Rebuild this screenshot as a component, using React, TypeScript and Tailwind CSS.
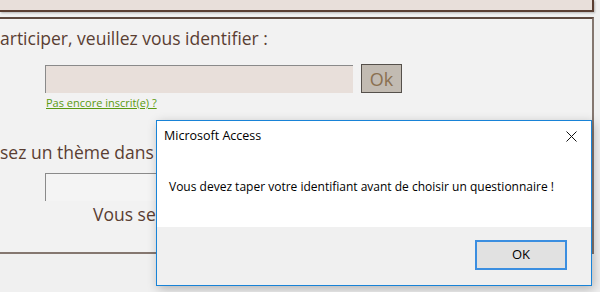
import React from 'react';

const pageFont = { fontFamily: '"Open Sans", "Noto Sans", sans-serif' };

const AccessDialog: React.FC = () => {
  return (
    <div className="absolute left-[156px] top-[120px] w-[436px] h-[166px] flex flex-col border border-[#1883d7] bg-white shadow-[2px_3px_10px_rgba(0,0,0,0.25)]">
      <div className="flex items-center justify-between h-[30px] pl-[7px] pr-[14px] text-[12.5px] text-black">
        <span>Microsoft Access</span>
        <svg width="11" height="11" viewBox="0 0 11 11" className="mt-[1px]">
          <path d="M0.5 0.5 L10.5 10.5 M10.5 0.5 L0.5 10.5" stroke="#111" strokeWidth="1" />
        </svg>
      </div>
      <div className="flex items-center h-[76px] pl-[12px] pb-[4px] text-[12px] text-black">
        Vous devez taper votre identifiant avant de choisir un questionnaire !
      </div>
      <div className="flex-1 flex items-center justify-end bg-[#f0f0f0] pr-[24px] pb-[2px]">
        <button className="w-[92px] h-[30px] bg-[#e1e1e1] border-2 border-[#3b8ee0] text-[13px] text-black">
          OK
        </button>
      </div>
    </div>
  );
};

export default function App() {
  return (
    <div className="relative w-[600px] h-[292px] overflow-hidden bg-[#f0f0f0]" style={pageFont}>
      <div className="w-[594px] h-[12px] bg-[#e8dfda] border-b-2 border-r-2 border-[#5a3e32] shadow-[1px_1px_2px_rgba(0,0,0,0.25)]" />
      <div className="mt-[5px] w-[594px] h-[237px] bg-[#f2f2f2] border-t-2 border-t-[#5e4a40] border-r-2 border-r-[#857770] border-b-2 border-b-[#857770]">
        <div className="pt-[6px] text-[17.5px] leading-[26px] text-[#5a3e32] whitespace-nowrap">
          articiper, veuillez vous identifier :
        </div>
        <div className="flex items-center gap-[8px] mt-[13px] ml-[45px]">
          <div className="w-[308px] h-[28px] bg-[#e8dfda] border-l border-t border-[#8a8a8a]" />
          <button className="w-[41px] h-[29px] bg-[#c2bbb2] border border-[#55504b] text-[18px] leading-none text-[#8a7050]">
            Ok
          </button>
        </div>
        <div className="ml-[46px] mt-[2px] text-[11px] leading-[15px] text-[#5a9a10] underline">
          Pas encore inscrit(e) ?
        </div>
        <div className="mt-[29px] text-[17.5px] leading-[26px] text-[#5a3e32] whitespace-nowrap">
          sez un thème dans
        </div>
        <div className="ml-[45px] mt-[8px] w-[308px] h-[28px] bg-[#f4f4f4] border-l border-t border-[#8a8a8a]" />
        <div className="ml-[93px] mt-0 text-[17.5px] leading-[26px] text-[#5a3e32] whitespace-nowrap">
          Vous se
        </div>
      </div>
      <AccessDialog />
    </div>
  );
}
